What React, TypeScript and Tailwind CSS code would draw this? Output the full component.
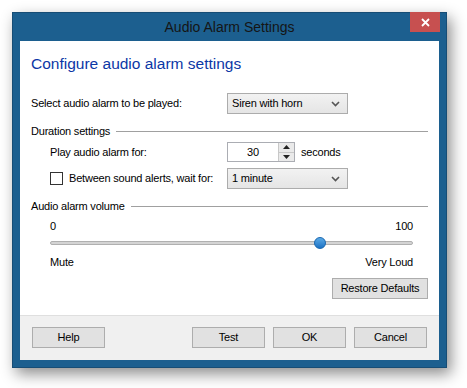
import React from "react";

const font = { fontFamily: '"Liberation Sans", Arial, sans-serif' };

function Chevron() {
  return (
    <svg width="9" height="6" viewBox="0 0 9 6" className="shrink-0">
      <path d="M1 1 L4.5 4.5 L8 1" fill="none" stroke="#555" strokeWidth="1.6" />
    </svg>
  );
}

function Select({ value }: { value: string }) {
  return (
    <div className="w-[121px] h-[21px] flex items-center justify-between pl-[4px] pr-[7px] border border-[#acacac] bg-gradient-to-b from-[#f2f2f2] to-[#e5e5e5] text-black">
      <span>{value}</span>
      <Chevron />
    </div>
  );
}

function Button({ label, w = "w-[73px]" }: { label: string; w?: string }) {
  return (
    <div className={`${w} h-[21px] flex items-center justify-center border border-[#adadad] bg-[#e1e1e1] text-black`}>
      {label}
    </div>
  );
}

function GroupTitle({ title }: { title: string }) {
  return (
    <div className="h-[14px] flex items-center pl-[11px] pr-[11px] gap-[6px]">
      <span className="whitespace-nowrap">{title}</span>
      <div className="flex-1 h-px bg-[#a0a0a0]" />
    </div>
  );
}

export default function App() {
  return (
    <div className="w-[467px] h-[388px] bg-white pt-[12px] pl-[12px] text-[11px] tracking-[-0.2px]" style={font}>
      <div className="w-[435px] h-[356px] bg-[#1c5f8f] border border-[#174d75] shadow-[4px_6px_14px_rgba(0,0,0,0.45)] flex flex-col">
        {/* title bar */}
        <div className="relative h-[28px] flex items-center justify-center shrink-0">
          <span className="text-[14px] tracking-normal text-[#151515] mt-[1px]">Audio Alarm Settings</span>
          <div className="absolute right-[6px] top-[-1px] w-[30px] h-[20px] bg-[#c75050] flex items-center justify-center">
            <svg width="9" height="9" viewBox="0 0 9 9">
              <path d="M1 1 L8 8 M8 1 L1 8" stroke="#fff" strokeWidth="1.8" />
            </svg>
          </div>
        </div>

        <div className="mx-[7px] flex-1 flex flex-col">
          {/* white body */}
          <div className="h-[274px] bg-white flex flex-col">
            <div className="mt-[12px] pl-[11px] h-[22px] flex items-center text-[15.5px] tracking-normal text-[#0c37a6]">
              Configure audio alarm settings
            </div>

            <div className="mt-[18px] pl-[11px] h-[21px] flex items-center">
              <span className="w-[196px]">Select audio alarm to be played:</span>
              <Select value="Siren with horn" />
            </div>

            <div className="mt-[10px]">
              <GroupTitle title="Duration settings" />
            </div>

            <div className="mt-[4px] pl-[30px] h-[20px] flex items-center">
              <span className="w-[177px]">Play audio alarm for:</span>
              <div className="w-[68px] h-[20px] flex border border-[#abadb3] bg-white">
                <div className="flex-1 flex items-center justify-center text-black">30</div>
                <div className="w-[16px] flex flex-col border-l border-[#c8c8c8] bg-[#eaeaea]">
                  <div className="flex-1 flex items-center justify-center border-b border-[#c8c8c8]">
                    <svg width="7" height="4" viewBox="0 0 7 4"><path d="M0 4 L3.5 0 L7 4 Z" fill="#222" /></svg>
                  </div>
                  <div className="flex-1 flex items-center justify-center">
                    <svg width="7" height="4" viewBox="0 0 7 4"><path d="M0 0 L3.5 4 L7 0 Z" fill="#222" /></svg>
                  </div>
                </div>
              </div>
              <span className="ml-[6px]">seconds</span>
            </div>

            <div className="mt-[6px] pl-[30px] h-[21px] flex items-center">
              <div className="w-[13px] h-[13px] border border-[#333] bg-white shrink-0" />
              <span className="ml-[6px] w-[158px]">Between sound alerts, wait for:</span>
              <Select value="1 minute" />
            </div>

            <div className="mt-[10px]">
              <GroupTitle title="Audio alarm volume" />
            </div>

            <div className="mt-[6px] pl-[30px] pr-[26px] h-[14px] flex items-center justify-between">
              <span>0</span>
              <span>100</span>
            </div>

            <div className="mt-[3px] pl-[30px] pr-[26px] h-[14px] flex items-center">
              <div className="relative w-full h-[4px] rounded-full bg-[#d4d4d4] border border-[#b0b0b0]">
                <div className="absolute left-[263px] top-[-5px] w-[12px] h-[12px] rounded-full bg-gradient-to-b from-[#5aaae6] to-[#1a72c4] border border-[#1766b0]" />
              </div>
            </div>

            <div className="mt-[5px] pl-[30px] pr-[26px] h-[14px] flex items-center justify-between">
              <span>Mute</span>
              <span>Very Loud</span>
            </div>

            <div className="mt-[9px] pr-[11px] flex justify-end">
              <Button label="Restore Defaults" w="w-[96px]" />
            </div>
          </div>

          {/* footer */}
          <div className="flex-1 bg-[#f0f0f0] border-t border-[#dfdfdf] pt-[11px] pl-[12px] pr-[12px] flex items-start">
            <Button label="Help" />
            <div className="flex-1" />
            <div className="flex gap-[8px]">
              <Button label="Test" />
              <Button label="OK" />
              <Button label="Cancel" />
            </div>
          </div>
        </div>
        <div className="h-[7px] shrink-0" />
      </div>
    </div>
  );
}
